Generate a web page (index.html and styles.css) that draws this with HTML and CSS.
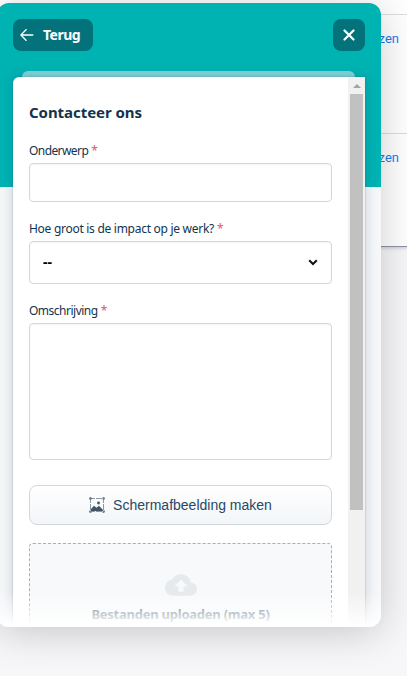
FILE: index.html
```html
<!DOCTYPE html>
<html lang="nl">
<head>
<meta charset="utf-8">
<title>Contacteer ons</title>
<link rel="stylesheet" href="styles.css">
</head>
<body>
<div class="page">
  <div class="row row-head"></div>
  <div class="row"><a class="link">zen</a></div>
  <div class="row"><a class="link">zen</a></div>
</div>
<section class="widget">
  <header class="bar">
    <button class="btn back">
      <svg width="14" height="14" viewBox="0 0 14 14" fill="none" stroke="#fff" stroke-width="1.3"><path d="M13.3 7H1M6.5 1.3L.9 7l5.6 5.7"/></svg>
      <span class="back-text">Terug</span>
    </button>
    <button class="btn close">
      <svg width="12" height="12" viewBox="0 0 12 12" stroke="#fff" stroke-width="2.2" stroke-linecap="round"><path d="M1.5 1.5l9 9M10.5 1.5l-9 9"/></svg>
    </button>
  </header>
  <div class="peek"></div>
  <div class="card">
    <form class="form">
      <h1 class="title">Contacteer ons</h1>
      <label class="label"><span class="t-subject">Onderwerp</span> <span class="req">*</span></label>
      <div class="field"></div>
      <label class="label"><span class="t-impact">Hoe groot is de impact op je werk?</span> <span class="req">*</span></label>
      <div class="field select"><span class="dashes">--</span>
        <svg width="10" height="7" viewBox="0 0 10 7" fill="none" stroke="#111" stroke-width="2"><path d="M1.2 1.2L5 5l3.8-3.8"/></svg>
      </div>
      <label class="label"><span class="t-desc">Omschrijving</span> <span class="req">*</span></label>
      <div class="field area"></div>
      <div class="shot">
        <svg width="16" height="16" viewBox="0 0 16 16"><path d="M1.5 0v16M14.5 0v16M0 1.5h16M0 14.5h16" fill="none" stroke="#8c98a3" stroke-width="1" stroke-dasharray="6 1"/><path d="M2 14v-2l3-3.3 2.5 2 2.5-2 4 4.3v1z" fill="#425466"/><circle cx="9.5" cy="6" r="1.4" fill="#425466"/><path d="M0 0h3v3H0zM13 0h3v3h-3zM0 13h3v3H0zM13 13h3v3h-3z" fill="#425466" opacity=".3"/></svg>
        <span>Schermafbeelding maken</span>
      </div>
      <div class="upload">
        <svg width="32" height="22" viewBox="0 4 24 16"><path fill="#e6eaed" d="M19.35 10.04C18.67 6.59 15.64 4 12 4 9.11 4 6.6 5.64 5.35 8.04 2.34 8.36 0 10.91 0 14c0 3.31 2.69 6 6 6h13c2.76 0 5-2.24 5-5 0-2.64-2.05-4.78-4.65-4.96zM14 13v4h-4v-4H7l5-5 5 5h-3z"/></svg>
        <span class="t-upload">Bestanden uploaden (max 5)</span>
      </div>
    </form>
    <div class="scroll"><i class="up"></i><i class="thumb"></i></div>
  </div>
  <div class="fade"></div>
</section>
</body>
</html>
```
FILE: styles.css
```css
* { box-sizing: border-box; }
body {
  margin: 0;
  width: 407px;
  height: 676px;
  overflow: hidden;
  position: relative;
  background: #f7f7f9;
  font-family: "Noto Sans", sans-serif;
  color: #12344d;
}
.page {
  height: 247px;
  background: #fff;
  border-bottom: 1px solid #8d93a5;
  box-shadow: 0 1px 4px rgba(0,0,0,.2);
}
.row { height: 119px; border-top: 1px solid #ddd; padding: 16px 8px; text-align: right; }
.row-head { height: 14px; padding: 0; border: 0; }
.link { display: block; font: 13px/16px Roboto, sans-serif; color: #1a7cf0; }
.widget {
  position: absolute;
  left: -3px;
  top: 3px;
  width: 384px;
  height: 624px;
  padding: 0 16px;
  border-radius: 12px;
  overflow: hidden;
  background: linear-gradient(#00b3b3 184px, #f5f7f9 184px);
  box-shadow: 0 5px 40px rgba(0,0,0,.2);
}
.bar { display: flex; justify-content: space-between; padding-top: 16px; }
.btn {
  display: flex;
  align-items: center;
  justify-content: center;
  height: 32px;
  width: 32px;
  padding: 0;
  border: 0;
  border-radius: 8px;
  background: #03727a;
  color: #fff;
}
.back { width: 80px; justify-content: flex-start; padding-left: 7px; gap: 9px; font: 700 14px/20px "Noto Sans", sans-serif; }
.back-text { letter-spacing: -.5px; }
.peek { height: 6px; margin: 20px 10px 0 9px; border-radius: 6px 6px 0 0; background: #7fd5d7; }
.card {
  display: flex;
  height: 560px;
  overflow: hidden;
  position: relative;
  background: #fff;
  border-radius: 6px 0 0 0;
  box-shadow: 0 0 14px rgba(18,52,77,.18), 0 0 2px rgba(60,60,110,.4);
}
.form { width: 335px; padding: 24px 16px 0; flex: none; }
.title { margin: 0; height: 39px; font-size: 15px; line-height: 22px; font-weight: 700; white-space: nowrap; letter-spacing: -.05px; }
.label { display: block; height: 23px; font-size: 12px; line-height: 21px; white-space: nowrap; }
.t-subject { letter-spacing: -.58px; }
.t-impact { letter-spacing: -.28px; }
.t-desc { letter-spacing: -.5px; }
.req { color: #e0557a; font-size: 12px; line-height: 1; }
.field {
  height: 39px;
  margin-bottom: 16px;
  border: 1px solid #cfd7df;
  border-radius: 4px;
  background: #fff;
  box-shadow: inset 0 1px 2px rgba(24,50,71,.05);
}
.select { height: 43px; display: flex; align-items: center; justify-content: space-between; padding: 0 13px; font-size: 13px; font-weight: 700; color: #000; }
.dashes { font-size: 14px; line-height: 18px; padding-bottom: 2px; }
.area { height: 137px; margin-bottom: 25px; }
.shot {
  display: flex;
  align-items: center;
  justify-content: center;
  gap: 8px;
  height: 40px;
  border: 1px solid #cfd7df;
  border-radius: 8px;
  background: linear-gradient(#fff, #f3f5f7);
  font: 14px/20px "Liberation Sans", sans-serif;
  color: #264966;
  white-space: nowrap;
}
.upload {
  display: flex;
  flex-direction: column;
  align-items: center;
  height: 130px;
  margin-top: 18px;
  padding-top: 30px;
  border: 1px dashed #a3afba;
  border-radius: 4px;
  background: #f7f9fb;
  font-size: 13px;
  line-height: 20px;
  font-weight: 700;
  color: #53697a;
  white-space: nowrap;
}
.upload svg { margin-bottom: 8px; flex: none; }
.t-upload { letter-spacing: -.24px; }
.scroll { width: 17px; background: #f1f1f1; display: flex; flex-direction: column; align-items: center; }
.up { margin-top: 7px; border: 4px solid transparent; border-top: 0; border-bottom-color: #a3a3a3; }
.thumb { width: 13px; height: 416px; margin-top: 6px; background: #c1c1c1; }
.fade { position: absolute; left: 0; right: 0; bottom: 0; height: 34px; background: linear-gradient(rgba(255,255,255,0), #fff 95%); }
```
